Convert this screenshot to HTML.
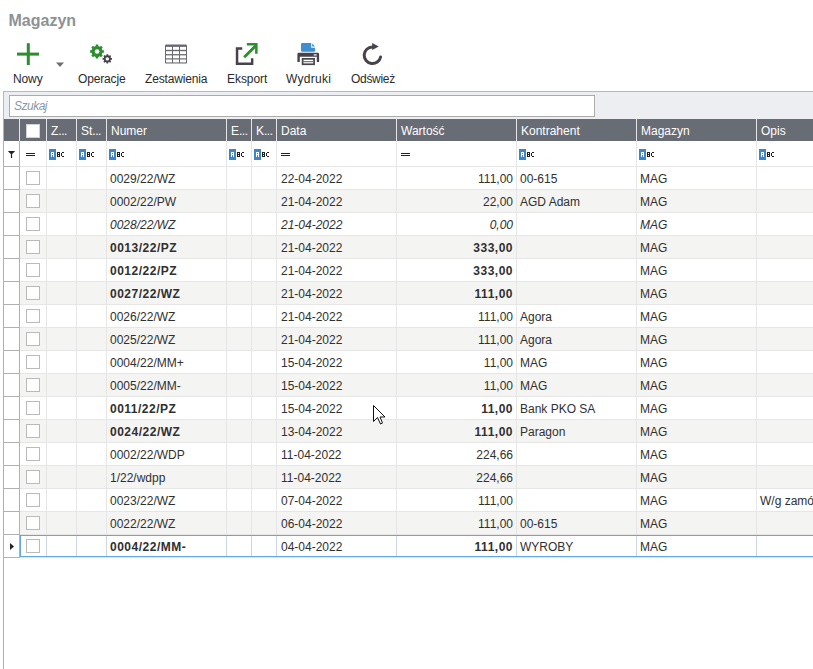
<!DOCTYPE html>
<html><head><meta charset="utf-8"><style>
*{margin:0;padding:0;box-sizing:border-box}
html,body{width:813px;height:669px;overflow:hidden;background:#fff}
body{position:relative;font-family:"Liberation Sans", sans-serif;color:#303030}
.abs{position:absolute}
.t{position:absolute;white-space:nowrap;font-size:12px;line-height:14px}
.lbl{position:absolute;white-space:nowrap;font-size:12px;line-height:14px;color:#2b2b2b;top:72px}
.hl{position:absolute;top:119px;height:22px;width:1px;background:#e4e5e7}
.ht{position:absolute;top:124px;color:#fff;font-size:12px;line-height:14px;white-space:nowrap}
.vl{position:absolute;width:1px;background:#e6e6e6}
.cb{position:absolute;left:26px;width:14px;height:14px;border:1px solid #bababa;background:#fff}
.abc{position:absolute;top:149px;width:16px;height:11px}
</style></head><body>

<div class="t" style="left:8.5px;top:11px;font-size:16px;line-height:19px;font-weight:bold;color:#8d9296">Magazyn</div>
<svg class="abs" style="left:0;top:36px" width="420" height="34" viewBox="0 36 420 34">
<rect x="17" y="52.6" width="22" height="3" fill="#2c8e2c"/>
<rect x="26.8" y="43.2" width="3" height="21.8" fill="#2c8e2c"/>
<path d="M56 62.5 L64 62.5 L60 67 Z" fill="#6e6e6e"/>
<path d="M95.75 46.04L95.75 44.61L98.25 44.61L98.25 46.04L99.98 46.76L100.99 45.75L102.75 47.51L101.74 48.52L102.46 50.25L103.89 50.25L103.89 52.75L102.46 52.75L101.74 54.48L102.75 55.49L100.99 57.25L99.98 56.24L98.25 56.96L98.25 58.39L95.75 58.39L95.75 56.96L94.02 56.24L93.01 57.25L91.25 55.49L92.26 54.48L91.54 52.75L90.11 52.75L90.11 50.25L91.54 50.25L92.26 48.52L91.25 47.51L93.01 45.75L94.02 46.76Z" fill="#2c8e2c"/><circle cx="97.1" cy="51.5" r="2.3" fill="#fff"/>
<path d="M106.45 55.30L106.45 54.18L108.15 54.18L108.15 55.30L109.25 55.75L110.04 54.96L111.24 56.16L110.45 56.95L110.90 58.05L112.02 58.05L112.02 59.75L110.90 59.75L110.45 60.85L111.24 61.64L110.04 62.84L109.25 62.05L108.15 62.50L108.15 63.62L106.45 63.62L106.45 62.50L105.35 62.05L104.56 62.84L103.36 61.64L104.15 60.85L103.70 59.75L102.58 59.75L102.58 58.05L103.70 58.05L104.15 56.95L103.36 56.16L104.56 54.96L105.35 55.75Z" fill="#46434c"/><circle cx="107.3" cy="58.9" r="1.7" fill="#fff"/>
<rect x="165" y="44.4" width="22" height="19.2" rx="1.2" fill="#6b6970"/>
<rect x="166" y="46.9" width="6" height="2.9" fill="#fff"/>
<rect x="166" y="51.2" width="6" height="2.9" fill="#fff"/>
<rect x="166" y="55.4" width="6" height="2.9" fill="#fff"/>
<rect x="166" y="59.5" width="6" height="2.9" fill="#fff"/>
<rect x="173" y="46.9" width="6" height="2.9" fill="#fff"/>
<rect x="173" y="51.2" width="6" height="2.9" fill="#fff"/>
<rect x="173" y="55.4" width="6" height="2.9" fill="#fff"/>
<rect x="173" y="59.5" width="6" height="2.9" fill="#fff"/>
<rect x="180" y="46.9" width="6" height="2.9" fill="#fff"/>
<rect x="180" y="51.2" width="6" height="2.9" fill="#fff"/>
<rect x="180" y="55.4" width="6" height="2.9" fill="#fff"/>
<rect x="180" y="59.5" width="6" height="2.9" fill="#fff"/>
<path d="M242.25 48.55 H237.05 V63.75 H252.15 V58.2" fill="none" stroke="#46434c" stroke-width="2.5"/>
<path d="M246.85 44.35 H256.35 V53.8" fill="none" stroke="#2c8e2c" stroke-width="2.5"/>
<path d="M244.2 57.2 L256.2 45.2" fill="none" stroke="#2c8e2c" stroke-width="2.8"/>
<path d="M301 44.2 Q301 42.9 302.3 42.9 H311.2 V47.7 H315.1 V50.5 Q315.1 51.7 313.9 51.7 H302.2 Q301 51.7 301 50.5 Z" fill="#3d8fd1"/>
<path d="M312.2 43.6 L315 46.6 H312.2 Z" fill="#3d8fd1"/>
<path d="M297.4 54.2 Q297.4 52.8 298.8 52.8 H317.7 Q319.1 52.8 319.1 54.2 V62 H316.8 V56.7 H299.8 V62 H297.4 Z" fill="#46434c"/>
<rect x="313.7" y="54" width="3" height="1.7" fill="#c9c9cc"/>
<rect x="302.6" y="58.85" width="11.5" height="5.4" fill="#fff" stroke="#46434c" stroke-width="1.7"/>
<rect x="302.6" y="61.1" width="11.5" height="1.1" fill="#6a6a6a"/>
<path d="M372.4 47 A8.3 8.3 0 1 0 380.6 57" fill="none" stroke="#46434c" stroke-width="3" stroke-linecap="round"/>
<path d="M372.2 43.1 L378.8 46.6 L372.2 50 Z" fill="#46434c"/>
</svg>
<div class="lbl" style="left:13px;letter-spacing:-0.12px">Nowy</div>
<div class="lbl" style="left:78px;letter-spacing:-0.15px">Operacje</div>
<div class="lbl" style="left:145px;letter-spacing:-0.15px">Zestawienia</div>
<div class="lbl" style="left:227px;letter-spacing:-0.05px">Eksport</div>
<div class="lbl" style="left:286px;letter-spacing:0.3px">Wydruki</div>
<div class="lbl" style="left:351px;letter-spacing:-0.3px">Odśwież</div>
<div class="abs" style="left:3px;top:91px;width:820px;height:28px;background:#eceef1;border-top:1px solid #b9b9b9;border-left:1px solid #b9b9b9"></div>
<div class="abs" style="left:9px;top:95px;width:586px;height:22px;background:#fff;border:1px solid #ababab"></div>
<div class="t" style="left:14px;top:99px;font-style:italic;color:#8a97a8;letter-spacing:-0.5px">Szukaj</div>
<div class="abs" style="left:3px;top:119px;width:1px;height:560px;background:#b1b1b1"></div>
<div class="abs" style="left:4px;top:119px;width:820px;height:22px;background:#686c75"></div>
<div class="hl" style="left:19px"></div>
<div class="hl" style="left:46px"></div>
<div class="hl" style="left:76px"></div>
<div class="hl" style="left:106px"></div>
<div class="hl" style="left:226px"></div>
<div class="hl" style="left:251px"></div>
<div class="hl" style="left:276px"></div>
<div class="hl" style="left:396px"></div>
<div class="hl" style="left:516px"></div>
<div class="hl" style="left:636px"></div>
<div class="hl" style="left:756px"></div>
<div class="abs" style="left:26px;top:124px;width:14px;height:14px;background:#fff;border:1px solid #d0d3d6"></div>
<div class="ht" style="left:51px">Z<span style="letter-spacing:-0.5px">...</span></div>
<div class="ht" style="left:81px">St<span style="letter-spacing:-0.5px">...</span></div>
<div class="ht" style="left:111px">Numer</div>
<div class="ht" style="left:231px">E<span style="letter-spacing:-0.5px">...</span></div>
<div class="ht" style="left:256px">K<span style="letter-spacing:-0.5px">...</span></div>
<div class="ht" style="left:281px">Data</div>
<div class="ht" style="left:401px">Wartość</div>
<div class="ht" style="left:521px">Kontrahent</div>
<div class="ht" style="left:641px">Magazyn</div>
<div class="ht" style="left:761px">Opis</div>
<svg class="abs" style="left:7px;top:150px" width="9" height="9" viewBox="7 150 9 9"><path d="M8.2 150.9 H14.8 V151.6 L12.1 154 V158 H10.9 V154 L8.2 151.6 Z" fill="#222"/></svg>
<div class="abs" style="left:26px;top:153px;width:9px;height:1px;background:#222"></div>
<div class="abs" style="left:26px;top:155px;width:9px;height:1px;background:#222"></div>
<div class="abs" style="left:281px;top:153px;width:9px;height:1px;background:#222"></div>
<div class="abs" style="left:281px;top:155px;width:9px;height:1px;background:#222"></div>
<div class="abs" style="left:401px;top:153px;width:9px;height:1px;background:#222"></div>
<div class="abs" style="left:401px;top:155px;width:9px;height:1px;background:#222"></div>
<svg class="abc" style="left:49px" width="16" height="11" viewBox="0 0 16 11" shape-rendering="crispEdges"><rect x="0" y="0" width="7" height="11" fill="#3e86c8"/><rect x="2" y="3" width="1" height="1" fill="#fff"/><rect x="3" y="3" width="1" height="1" fill="#fff"/><rect x="4" y="3" width="1" height="1" fill="#fff"/><rect x="2" y="4" width="1" height="1" fill="#fff"/><rect x="4" y="4" width="1" height="1" fill="#fff"/><rect x="2" y="5" width="1" height="1" fill="#fff"/><rect x="3" y="5" width="1" height="1" fill="#fff"/><rect x="4" y="5" width="1" height="1" fill="#fff"/><rect x="2" y="6" width="1" height="1" fill="#fff"/><rect x="4" y="6" width="1" height="1" fill="#fff"/><rect x="2" y="7" width="1" height="1" fill="#fff"/><rect x="4" y="7" width="1" height="1" fill="#fff"/><rect x="8" y="3" width="1" height="1" fill="#1e1e1e"/><rect x="9" y="3" width="1" height="1" fill="#1e1e1e"/><rect x="10" y="3" width="1" height="1" fill="#1e1e1e"/><rect x="8" y="4" width="1" height="1" fill="#1e1e1e"/><rect x="10" y="4" width="1" height="1" fill="#1e1e1e"/><rect x="8" y="5" width="1" height="1" fill="#1e1e1e"/><rect x="9" y="5" width="1" height="1" fill="#1e1e1e"/><rect x="10" y="5" width="1" height="1" fill="#1e1e1e"/><rect x="8" y="6" width="1" height="1" fill="#1e1e1e"/><rect x="10" y="6" width="1" height="1" fill="#1e1e1e"/><rect x="8" y="7" width="1" height="1" fill="#1e1e1e"/><rect x="9" y="7" width="1" height="1" fill="#1e1e1e"/><rect x="10" y="7" width="1" height="1" fill="#1e1e1e"/><rect x="13" y="3" width="1" height="1" fill="#1e1e1e"/><rect x="14" y="3" width="1" height="1" fill="#1e1e1e"/><rect x="12" y="4" width="1" height="1" fill="#1e1e1e"/><rect x="12" y="5" width="1" height="1" fill="#1e1e1e"/><rect x="12" y="6" width="1" height="1" fill="#1e1e1e"/><rect x="13" y="7" width="1" height="1" fill="#1e1e1e"/><rect x="14" y="7" width="1" height="1" fill="#1e1e1e"/></svg>
<svg class="abc" style="left:79px" width="16" height="11" viewBox="0 0 16 11" shape-rendering="crispEdges"><rect x="0" y="0" width="7" height="11" fill="#3e86c8"/><rect x="2" y="3" width="1" height="1" fill="#fff"/><rect x="3" y="3" width="1" height="1" fill="#fff"/><rect x="4" y="3" width="1" height="1" fill="#fff"/><rect x="2" y="4" width="1" height="1" fill="#fff"/><rect x="4" y="4" width="1" height="1" fill="#fff"/><rect x="2" y="5" width="1" height="1" fill="#fff"/><rect x="3" y="5" width="1" height="1" fill="#fff"/><rect x="4" y="5" width="1" height="1" fill="#fff"/><rect x="2" y="6" width="1" height="1" fill="#fff"/><rect x="4" y="6" width="1" height="1" fill="#fff"/><rect x="2" y="7" width="1" height="1" fill="#fff"/><rect x="4" y="7" width="1" height="1" fill="#fff"/><rect x="8" y="3" width="1" height="1" fill="#1e1e1e"/><rect x="9" y="3" width="1" height="1" fill="#1e1e1e"/><rect x="10" y="3" width="1" height="1" fill="#1e1e1e"/><rect x="8" y="4" width="1" height="1" fill="#1e1e1e"/><rect x="10" y="4" width="1" height="1" fill="#1e1e1e"/><rect x="8" y="5" width="1" height="1" fill="#1e1e1e"/><rect x="9" y="5" width="1" height="1" fill="#1e1e1e"/><rect x="10" y="5" width="1" height="1" fill="#1e1e1e"/><rect x="8" y="6" width="1" height="1" fill="#1e1e1e"/><rect x="10" y="6" width="1" height="1" fill="#1e1e1e"/><rect x="8" y="7" width="1" height="1" fill="#1e1e1e"/><rect x="9" y="7" width="1" height="1" fill="#1e1e1e"/><rect x="10" y="7" width="1" height="1" fill="#1e1e1e"/><rect x="13" y="3" width="1" height="1" fill="#1e1e1e"/><rect x="14" y="3" width="1" height="1" fill="#1e1e1e"/><rect x="12" y="4" width="1" height="1" fill="#1e1e1e"/><rect x="12" y="5" width="1" height="1" fill="#1e1e1e"/><rect x="12" y="6" width="1" height="1" fill="#1e1e1e"/><rect x="13" y="7" width="1" height="1" fill="#1e1e1e"/><rect x="14" y="7" width="1" height="1" fill="#1e1e1e"/></svg>
<svg class="abc" style="left:109px" width="16" height="11" viewBox="0 0 16 11" shape-rendering="crispEdges"><rect x="0" y="0" width="7" height="11" fill="#3e86c8"/><rect x="2" y="3" width="1" height="1" fill="#fff"/><rect x="3" y="3" width="1" height="1" fill="#fff"/><rect x="4" y="3" width="1" height="1" fill="#fff"/><rect x="2" y="4" width="1" height="1" fill="#fff"/><rect x="4" y="4" width="1" height="1" fill="#fff"/><rect x="2" y="5" width="1" height="1" fill="#fff"/><rect x="3" y="5" width="1" height="1" fill="#fff"/><rect x="4" y="5" width="1" height="1" fill="#fff"/><rect x="2" y="6" width="1" height="1" fill="#fff"/><rect x="4" y="6" width="1" height="1" fill="#fff"/><rect x="2" y="7" width="1" height="1" fill="#fff"/><rect x="4" y="7" width="1" height="1" fill="#fff"/><rect x="8" y="3" width="1" height="1" fill="#1e1e1e"/><rect x="9" y="3" width="1" height="1" fill="#1e1e1e"/><rect x="10" y="3" width="1" height="1" fill="#1e1e1e"/><rect x="8" y="4" width="1" height="1" fill="#1e1e1e"/><rect x="10" y="4" width="1" height="1" fill="#1e1e1e"/><rect x="8" y="5" width="1" height="1" fill="#1e1e1e"/><rect x="9" y="5" width="1" height="1" fill="#1e1e1e"/><rect x="10" y="5" width="1" height="1" fill="#1e1e1e"/><rect x="8" y="6" width="1" height="1" fill="#1e1e1e"/><rect x="10" y="6" width="1" height="1" fill="#1e1e1e"/><rect x="8" y="7" width="1" height="1" fill="#1e1e1e"/><rect x="9" y="7" width="1" height="1" fill="#1e1e1e"/><rect x="10" y="7" width="1" height="1" fill="#1e1e1e"/><rect x="13" y="3" width="1" height="1" fill="#1e1e1e"/><rect x="14" y="3" width="1" height="1" fill="#1e1e1e"/><rect x="12" y="4" width="1" height="1" fill="#1e1e1e"/><rect x="12" y="5" width="1" height="1" fill="#1e1e1e"/><rect x="12" y="6" width="1" height="1" fill="#1e1e1e"/><rect x="13" y="7" width="1" height="1" fill="#1e1e1e"/><rect x="14" y="7" width="1" height="1" fill="#1e1e1e"/></svg>
<svg class="abc" style="left:229px" width="16" height="11" viewBox="0 0 16 11" shape-rendering="crispEdges"><rect x="0" y="0" width="7" height="11" fill="#3e86c8"/><rect x="2" y="3" width="1" height="1" fill="#fff"/><rect x="3" y="3" width="1" height="1" fill="#fff"/><rect x="4" y="3" width="1" height="1" fill="#fff"/><rect x="2" y="4" width="1" height="1" fill="#fff"/><rect x="4" y="4" width="1" height="1" fill="#fff"/><rect x="2" y="5" width="1" height="1" fill="#fff"/><rect x="3" y="5" width="1" height="1" fill="#fff"/><rect x="4" y="5" width="1" height="1" fill="#fff"/><rect x="2" y="6" width="1" height="1" fill="#fff"/><rect x="4" y="6" width="1" height="1" fill="#fff"/><rect x="2" y="7" width="1" height="1" fill="#fff"/><rect x="4" y="7" width="1" height="1" fill="#fff"/><rect x="8" y="3" width="1" height="1" fill="#1e1e1e"/><rect x="9" y="3" width="1" height="1" fill="#1e1e1e"/><rect x="10" y="3" width="1" height="1" fill="#1e1e1e"/><rect x="8" y="4" width="1" height="1" fill="#1e1e1e"/><rect x="10" y="4" width="1" height="1" fill="#1e1e1e"/><rect x="8" y="5" width="1" height="1" fill="#1e1e1e"/><rect x="9" y="5" width="1" height="1" fill="#1e1e1e"/><rect x="10" y="5" width="1" height="1" fill="#1e1e1e"/><rect x="8" y="6" width="1" height="1" fill="#1e1e1e"/><rect x="10" y="6" width="1" height="1" fill="#1e1e1e"/><rect x="8" y="7" width="1" height="1" fill="#1e1e1e"/><rect x="9" y="7" width="1" height="1" fill="#1e1e1e"/><rect x="10" y="7" width="1" height="1" fill="#1e1e1e"/><rect x="13" y="3" width="1" height="1" fill="#1e1e1e"/><rect x="14" y="3" width="1" height="1" fill="#1e1e1e"/><rect x="12" y="4" width="1" height="1" fill="#1e1e1e"/><rect x="12" y="5" width="1" height="1" fill="#1e1e1e"/><rect x="12" y="6" width="1" height="1" fill="#1e1e1e"/><rect x="13" y="7" width="1" height="1" fill="#1e1e1e"/><rect x="14" y="7" width="1" height="1" fill="#1e1e1e"/></svg>
<svg class="abc" style="left:254px" width="16" height="11" viewBox="0 0 16 11" shape-rendering="crispEdges"><rect x="0" y="0" width="7" height="11" fill="#3e86c8"/><rect x="2" y="3" width="1" height="1" fill="#fff"/><rect x="3" y="3" width="1" height="1" fill="#fff"/><rect x="4" y="3" width="1" height="1" fill="#fff"/><rect x="2" y="4" width="1" height="1" fill="#fff"/><rect x="4" y="4" width="1" height="1" fill="#fff"/><rect x="2" y="5" width="1" height="1" fill="#fff"/><rect x="3" y="5" width="1" height="1" fill="#fff"/><rect x="4" y="5" width="1" height="1" fill="#fff"/><rect x="2" y="6" width="1" height="1" fill="#fff"/><rect x="4" y="6" width="1" height="1" fill="#fff"/><rect x="2" y="7" width="1" height="1" fill="#fff"/><rect x="4" y="7" width="1" height="1" fill="#fff"/><rect x="8" y="3" width="1" height="1" fill="#1e1e1e"/><rect x="9" y="3" width="1" height="1" fill="#1e1e1e"/><rect x="10" y="3" width="1" height="1" fill="#1e1e1e"/><rect x="8" y="4" width="1" height="1" fill="#1e1e1e"/><rect x="10" y="4" width="1" height="1" fill="#1e1e1e"/><rect x="8" y="5" width="1" height="1" fill="#1e1e1e"/><rect x="9" y="5" width="1" height="1" fill="#1e1e1e"/><rect x="10" y="5" width="1" height="1" fill="#1e1e1e"/><rect x="8" y="6" width="1" height="1" fill="#1e1e1e"/><rect x="10" y="6" width="1" height="1" fill="#1e1e1e"/><rect x="8" y="7" width="1" height="1" fill="#1e1e1e"/><rect x="9" y="7" width="1" height="1" fill="#1e1e1e"/><rect x="10" y="7" width="1" height="1" fill="#1e1e1e"/><rect x="13" y="3" width="1" height="1" fill="#1e1e1e"/><rect x="14" y="3" width="1" height="1" fill="#1e1e1e"/><rect x="12" y="4" width="1" height="1" fill="#1e1e1e"/><rect x="12" y="5" width="1" height="1" fill="#1e1e1e"/><rect x="12" y="6" width="1" height="1" fill="#1e1e1e"/><rect x="13" y="7" width="1" height="1" fill="#1e1e1e"/><rect x="14" y="7" width="1" height="1" fill="#1e1e1e"/></svg>
<svg class="abc" style="left:519px" width="16" height="11" viewBox="0 0 16 11" shape-rendering="crispEdges"><rect x="0" y="0" width="7" height="11" fill="#3e86c8"/><rect x="2" y="3" width="1" height="1" fill="#fff"/><rect x="3" y="3" width="1" height="1" fill="#fff"/><rect x="4" y="3" width="1" height="1" fill="#fff"/><rect x="2" y="4" width="1" height="1" fill="#fff"/><rect x="4" y="4" width="1" height="1" fill="#fff"/><rect x="2" y="5" width="1" height="1" fill="#fff"/><rect x="3" y="5" width="1" height="1" fill="#fff"/><rect x="4" y="5" width="1" height="1" fill="#fff"/><rect x="2" y="6" width="1" height="1" fill="#fff"/><rect x="4" y="6" width="1" height="1" fill="#fff"/><rect x="2" y="7" width="1" height="1" fill="#fff"/><rect x="4" y="7" width="1" height="1" fill="#fff"/><rect x="8" y="3" width="1" height="1" fill="#1e1e1e"/><rect x="9" y="3" width="1" height="1" fill="#1e1e1e"/><rect x="10" y="3" width="1" height="1" fill="#1e1e1e"/><rect x="8" y="4" width="1" height="1" fill="#1e1e1e"/><rect x="10" y="4" width="1" height="1" fill="#1e1e1e"/><rect x="8" y="5" width="1" height="1" fill="#1e1e1e"/><rect x="9" y="5" width="1" height="1" fill="#1e1e1e"/><rect x="10" y="5" width="1" height="1" fill="#1e1e1e"/><rect x="8" y="6" width="1" height="1" fill="#1e1e1e"/><rect x="10" y="6" width="1" height="1" fill="#1e1e1e"/><rect x="8" y="7" width="1" height="1" fill="#1e1e1e"/><rect x="9" y="7" width="1" height="1" fill="#1e1e1e"/><rect x="10" y="7" width="1" height="1" fill="#1e1e1e"/><rect x="13" y="3" width="1" height="1" fill="#1e1e1e"/><rect x="14" y="3" width="1" height="1" fill="#1e1e1e"/><rect x="12" y="4" width="1" height="1" fill="#1e1e1e"/><rect x="12" y="5" width="1" height="1" fill="#1e1e1e"/><rect x="12" y="6" width="1" height="1" fill="#1e1e1e"/><rect x="13" y="7" width="1" height="1" fill="#1e1e1e"/><rect x="14" y="7" width="1" height="1" fill="#1e1e1e"/></svg>
<svg class="abc" style="left:639px" width="16" height="11" viewBox="0 0 16 11" shape-rendering="crispEdges"><rect x="0" y="0" width="7" height="11" fill="#3e86c8"/><rect x="2" y="3" width="1" height="1" fill="#fff"/><rect x="3" y="3" width="1" height="1" fill="#fff"/><rect x="4" y="3" width="1" height="1" fill="#fff"/><rect x="2" y="4" width="1" height="1" fill="#fff"/><rect x="4" y="4" width="1" height="1" fill="#fff"/><rect x="2" y="5" width="1" height="1" fill="#fff"/><rect x="3" y="5" width="1" height="1" fill="#fff"/><rect x="4" y="5" width="1" height="1" fill="#fff"/><rect x="2" y="6" width="1" height="1" fill="#fff"/><rect x="4" y="6" width="1" height="1" fill="#fff"/><rect x="2" y="7" width="1" height="1" fill="#fff"/><rect x="4" y="7" width="1" height="1" fill="#fff"/><rect x="8" y="3" width="1" height="1" fill="#1e1e1e"/><rect x="9" y="3" width="1" height="1" fill="#1e1e1e"/><rect x="10" y="3" width="1" height="1" fill="#1e1e1e"/><rect x="8" y="4" width="1" height="1" fill="#1e1e1e"/><rect x="10" y="4" width="1" height="1" fill="#1e1e1e"/><rect x="8" y="5" width="1" height="1" fill="#1e1e1e"/><rect x="9" y="5" width="1" height="1" fill="#1e1e1e"/><rect x="10" y="5" width="1" height="1" fill="#1e1e1e"/><rect x="8" y="6" width="1" height="1" fill="#1e1e1e"/><rect x="10" y="6" width="1" height="1" fill="#1e1e1e"/><rect x="8" y="7" width="1" height="1" fill="#1e1e1e"/><rect x="9" y="7" width="1" height="1" fill="#1e1e1e"/><rect x="10" y="7" width="1" height="1" fill="#1e1e1e"/><rect x="13" y="3" width="1" height="1" fill="#1e1e1e"/><rect x="14" y="3" width="1" height="1" fill="#1e1e1e"/><rect x="12" y="4" width="1" height="1" fill="#1e1e1e"/><rect x="12" y="5" width="1" height="1" fill="#1e1e1e"/><rect x="12" y="6" width="1" height="1" fill="#1e1e1e"/><rect x="13" y="7" width="1" height="1" fill="#1e1e1e"/><rect x="14" y="7" width="1" height="1" fill="#1e1e1e"/></svg>
<svg class="abc" style="left:759px" width="16" height="11" viewBox="0 0 16 11" shape-rendering="crispEdges"><rect x="0" y="0" width="7" height="11" fill="#3e86c8"/><rect x="2" y="3" width="1" height="1" fill="#fff"/><rect x="3" y="3" width="1" height="1" fill="#fff"/><rect x="4" y="3" width="1" height="1" fill="#fff"/><rect x="2" y="4" width="1" height="1" fill="#fff"/><rect x="4" y="4" width="1" height="1" fill="#fff"/><rect x="2" y="5" width="1" height="1" fill="#fff"/><rect x="3" y="5" width="1" height="1" fill="#fff"/><rect x="4" y="5" width="1" height="1" fill="#fff"/><rect x="2" y="6" width="1" height="1" fill="#fff"/><rect x="4" y="6" width="1" height="1" fill="#fff"/><rect x="2" y="7" width="1" height="1" fill="#fff"/><rect x="4" y="7" width="1" height="1" fill="#fff"/><rect x="8" y="3" width="1" height="1" fill="#1e1e1e"/><rect x="9" y="3" width="1" height="1" fill="#1e1e1e"/><rect x="10" y="3" width="1" height="1" fill="#1e1e1e"/><rect x="8" y="4" width="1" height="1" fill="#1e1e1e"/><rect x="10" y="4" width="1" height="1" fill="#1e1e1e"/><rect x="8" y="5" width="1" height="1" fill="#1e1e1e"/><rect x="9" y="5" width="1" height="1" fill="#1e1e1e"/><rect x="10" y="5" width="1" height="1" fill="#1e1e1e"/><rect x="8" y="6" width="1" height="1" fill="#1e1e1e"/><rect x="10" y="6" width="1" height="1" fill="#1e1e1e"/><rect x="8" y="7" width="1" height="1" fill="#1e1e1e"/><rect x="9" y="7" width="1" height="1" fill="#1e1e1e"/><rect x="10" y="7" width="1" height="1" fill="#1e1e1e"/><rect x="13" y="3" width="1" height="1" fill="#1e1e1e"/><rect x="14" y="3" width="1" height="1" fill="#1e1e1e"/><rect x="12" y="4" width="1" height="1" fill="#1e1e1e"/><rect x="12" y="5" width="1" height="1" fill="#1e1e1e"/><rect x="12" y="6" width="1" height="1" fill="#1e1e1e"/><rect x="13" y="7" width="1" height="1" fill="#1e1e1e"/><rect x="14" y="7" width="1" height="1" fill="#1e1e1e"/></svg>
<div class="t" style="left:110px;top:172px;">0029/22/WZ</div>
<div class="t" style="left:281px;top:172px;">22-04-2022</div>
<div class="t" style="left:396px;width:117px;text-align:right;top:172px;">111,00</div>
<div class="t" style="left:520px;top:172px;">00-615</div>
<div class="t" style="left:640px;top:172px;">MAG</div>
<div class="cb" style="top:171px"></div>
<div class="abs" style="left:20px;top:190px;width:800px;height:22px;background:#f4f4f3"></div>
<div class="t" style="left:110px;top:195px;">0002/22/PW</div>
<div class="t" style="left:281px;top:195px;">21-04-2022</div>
<div class="t" style="left:396px;width:117px;text-align:right;top:195px;">22,00</div>
<div class="t" style="left:520px;top:195px;">AGD Adam</div>
<div class="t" style="left:640px;top:195px;">MAG</div>
<div class="cb" style="top:194px"></div>
<div class="t" style="left:110px;top:218px;font-style:italic;">0028/22/WZ</div>
<div class="t" style="left:281px;top:218px;font-style:italic;">21-04-2022</div>
<div class="t" style="left:396px;width:117px;text-align:right;top:218px;font-style:italic;">0,00</div>
<div class="t" style="left:640px;top:218px;font-style:italic;">MAG</div>
<div class="cb" style="top:217px"></div>
<div class="abs" style="left:20px;top:236px;width:800px;height:22px;background:#f4f4f3"></div>
<div class="t" style="left:110px;top:241px;font-weight:bold;letter-spacing:0.5px;">0013/22/PZ</div>
<div class="t" style="left:281px;top:241px;">21-04-2022</div>
<div class="t" style="left:396px;width:117px;text-align:right;top:241px;font-weight:bold;letter-spacing:0.5px;">333,00</div>
<div class="t" style="left:640px;top:241px;">MAG</div>
<div class="cb" style="top:240px"></div>
<div class="t" style="left:110px;top:264px;font-weight:bold;letter-spacing:0.5px;">0012/22/PZ</div>
<div class="t" style="left:281px;top:264px;">21-04-2022</div>
<div class="t" style="left:396px;width:117px;text-align:right;top:264px;font-weight:bold;letter-spacing:0.5px;">333,00</div>
<div class="t" style="left:640px;top:264px;">MAG</div>
<div class="cb" style="top:263px"></div>
<div class="abs" style="left:20px;top:282px;width:800px;height:22px;background:#f4f4f3"></div>
<div class="t" style="left:110px;top:287px;font-weight:bold;letter-spacing:0.5px;">0027/22/WZ</div>
<div class="t" style="left:281px;top:287px;">21-04-2022</div>
<div class="t" style="left:396px;width:117px;text-align:right;top:287px;font-weight:bold;letter-spacing:0.5px;">111,00</div>
<div class="t" style="left:640px;top:287px;">MAG</div>
<div class="cb" style="top:286px"></div>
<div class="t" style="left:110px;top:310px;">0026/22/WZ</div>
<div class="t" style="left:281px;top:310px;">21-04-2022</div>
<div class="t" style="left:396px;width:117px;text-align:right;top:310px;">111,00</div>
<div class="t" style="left:520px;top:310px;">Agora</div>
<div class="t" style="left:640px;top:310px;">MAG</div>
<div class="cb" style="top:309px"></div>
<div class="abs" style="left:20px;top:328px;width:800px;height:22px;background:#f4f4f3"></div>
<div class="t" style="left:110px;top:333px;">0025/22/WZ</div>
<div class="t" style="left:281px;top:333px;">21-04-2022</div>
<div class="t" style="left:396px;width:117px;text-align:right;top:333px;">111,00</div>
<div class="t" style="left:520px;top:333px;">Agora</div>
<div class="t" style="left:640px;top:333px;">MAG</div>
<div class="cb" style="top:332px"></div>
<div class="t" style="left:110px;top:356px;">0004/22/MM+</div>
<div class="t" style="left:281px;top:356px;">15-04-2022</div>
<div class="t" style="left:396px;width:117px;text-align:right;top:356px;">11,00</div>
<div class="t" style="left:520px;top:356px;">MAG</div>
<div class="t" style="left:640px;top:356px;">MAG</div>
<div class="cb" style="top:355px"></div>
<div class="abs" style="left:20px;top:374px;width:800px;height:22px;background:#f4f4f3"></div>
<div class="t" style="left:110px;top:379px;">0005/22/MM-</div>
<div class="t" style="left:281px;top:379px;">15-04-2022</div>
<div class="t" style="left:396px;width:117px;text-align:right;top:379px;">11,00</div>
<div class="t" style="left:520px;top:379px;">MAG</div>
<div class="t" style="left:640px;top:379px;">MAG</div>
<div class="cb" style="top:378px"></div>
<div class="t" style="left:110px;top:402px;font-weight:bold;letter-spacing:0.5px;">0011/22/PZ</div>
<div class="t" style="left:281px;top:402px;">15-04-2022</div>
<div class="t" style="left:396px;width:117px;text-align:right;top:402px;font-weight:bold;letter-spacing:0.5px;">11,00</div>
<div class="t" style="left:520px;top:402px;">Bank PKO SA</div>
<div class="t" style="left:640px;top:402px;">MAG</div>
<div class="cb" style="top:401px"></div>
<div class="abs" style="left:20px;top:420px;width:800px;height:22px;background:#f4f4f3"></div>
<div class="t" style="left:110px;top:425px;font-weight:bold;letter-spacing:0.5px;">0024/22/WZ</div>
<div class="t" style="left:281px;top:425px;">13-04-2022</div>
<div class="t" style="left:396px;width:117px;text-align:right;top:425px;font-weight:bold;letter-spacing:0.5px;">111,00</div>
<div class="t" style="left:520px;top:425px;">Paragon</div>
<div class="t" style="left:640px;top:425px;">MAG</div>
<div class="cb" style="top:424px"></div>
<div class="t" style="left:110px;top:448px;">0002/22/WDP</div>
<div class="t" style="left:281px;top:448px;">11-04-2022</div>
<div class="t" style="left:396px;width:117px;text-align:right;top:448px;">224,66</div>
<div class="t" style="left:640px;top:448px;">MAG</div>
<div class="cb" style="top:447px"></div>
<div class="abs" style="left:20px;top:466px;width:800px;height:22px;background:#f4f4f3"></div>
<div class="t" style="left:110px;top:471px;">1/22/wdpp</div>
<div class="t" style="left:281px;top:471px;">11-04-2022</div>
<div class="t" style="left:396px;width:117px;text-align:right;top:471px;">224,66</div>
<div class="t" style="left:640px;top:471px;">MAG</div>
<div class="cb" style="top:470px"></div>
<div class="t" style="left:110px;top:494px;">0023/22/WZ</div>
<div class="t" style="left:281px;top:494px;">07-04-2022</div>
<div class="t" style="left:396px;width:117px;text-align:right;top:494px;">111,00</div>
<div class="t" style="left:640px;top:494px;">MAG</div>
<div class="t" style="left:760px;top:494px;">W/g zamówienia</div>
<div class="cb" style="top:493px"></div>
<div class="abs" style="left:20px;top:512px;width:800px;height:22px;background:#f4f4f3"></div>
<div class="t" style="left:110px;top:517px;">0022/22/WZ</div>
<div class="t" style="left:281px;top:517px;">06-04-2022</div>
<div class="t" style="left:396px;width:117px;text-align:right;top:517px;">111,00</div>
<div class="t" style="left:520px;top:517px;">00-615</div>
<div class="t" style="left:640px;top:517px;">MAG</div>
<div class="cb" style="top:516px"></div>
<div class="t" style="left:110px;top:540px;font-weight:bold;letter-spacing:0.5px;">0004/22/MM-</div>
<div class="t" style="left:281px;top:540px;">04-04-2022</div>
<div class="t" style="left:396px;width:117px;text-align:right;top:540px;font-weight:bold;letter-spacing:0.5px;">111,00</div>
<div class="t" style="left:520px;top:540px;">WYROBY</div>
<div class="t" style="left:640px;top:540px;">MAG</div>
<div class="cb" style="top:539px"></div>
<div class="abs" style="left:20px;top:166px;width:800px;height:1px;background:#e6e6e6"></div>
<div class="abs" style="left:3px;top:166px;width:17px;height:1px;background:#b1b1b1"></div>
<div class="abs" style="left:20px;top:189px;width:800px;height:1px;background:#e6e6e6"></div>
<div class="abs" style="left:3px;top:189px;width:17px;height:1px;background:#b1b1b1"></div>
<div class="abs" style="left:20px;top:212px;width:800px;height:1px;background:#e6e6e6"></div>
<div class="abs" style="left:3px;top:212px;width:17px;height:1px;background:#b1b1b1"></div>
<div class="abs" style="left:20px;top:235px;width:800px;height:1px;background:#e6e6e6"></div>
<div class="abs" style="left:3px;top:235px;width:17px;height:1px;background:#b1b1b1"></div>
<div class="abs" style="left:20px;top:258px;width:800px;height:1px;background:#e6e6e6"></div>
<div class="abs" style="left:3px;top:258px;width:17px;height:1px;background:#b1b1b1"></div>
<div class="abs" style="left:20px;top:281px;width:800px;height:1px;background:#e6e6e6"></div>
<div class="abs" style="left:3px;top:281px;width:17px;height:1px;background:#b1b1b1"></div>
<div class="abs" style="left:20px;top:304px;width:800px;height:1px;background:#e6e6e6"></div>
<div class="abs" style="left:3px;top:304px;width:17px;height:1px;background:#b1b1b1"></div>
<div class="abs" style="left:20px;top:327px;width:800px;height:1px;background:#e6e6e6"></div>
<div class="abs" style="left:3px;top:327px;width:17px;height:1px;background:#b1b1b1"></div>
<div class="abs" style="left:20px;top:350px;width:800px;height:1px;background:#e6e6e6"></div>
<div class="abs" style="left:3px;top:350px;width:17px;height:1px;background:#b1b1b1"></div>
<div class="abs" style="left:20px;top:373px;width:800px;height:1px;background:#e6e6e6"></div>
<div class="abs" style="left:3px;top:373px;width:17px;height:1px;background:#b1b1b1"></div>
<div class="abs" style="left:20px;top:396px;width:800px;height:1px;background:#e6e6e6"></div>
<div class="abs" style="left:3px;top:396px;width:17px;height:1px;background:#b1b1b1"></div>
<div class="abs" style="left:20px;top:419px;width:800px;height:1px;background:#e6e6e6"></div>
<div class="abs" style="left:3px;top:419px;width:17px;height:1px;background:#b1b1b1"></div>
<div class="abs" style="left:20px;top:442px;width:800px;height:1px;background:#e6e6e6"></div>
<div class="abs" style="left:3px;top:442px;width:17px;height:1px;background:#b1b1b1"></div>
<div class="abs" style="left:20px;top:465px;width:800px;height:1px;background:#e6e6e6"></div>
<div class="abs" style="left:3px;top:465px;width:17px;height:1px;background:#b1b1b1"></div>
<div class="abs" style="left:20px;top:488px;width:800px;height:1px;background:#e6e6e6"></div>
<div class="abs" style="left:3px;top:488px;width:17px;height:1px;background:#b1b1b1"></div>
<div class="abs" style="left:20px;top:511px;width:800px;height:1px;background:#e6e6e6"></div>
<div class="abs" style="left:3px;top:511px;width:17px;height:1px;background:#b1b1b1"></div>
<div class="abs" style="left:20px;top:534px;width:800px;height:1px;background:#e6e6e6"></div>
<div class="abs" style="left:3px;top:534px;width:17px;height:1px;background:#b1b1b1"></div>
<div class="abs" style="left:20px;top:557px;width:800px;height:1px;background:#e6e6e6"></div>
<div class="abs" style="left:3px;top:557px;width:17px;height:1px;background:#b1b1b1"></div>
<div class="abs" style="left:19px;top:141px;width:1px;height:417px;background:#b1b1b1"></div>
<div class="vl" style="left:46px;top:141px;height:417px"></div>
<div class="vl" style="left:76px;top:141px;height:417px"></div>
<div class="vl" style="left:106px;top:141px;height:417px"></div>
<div class="vl" style="left:226px;top:141px;height:417px"></div>
<div class="vl" style="left:251px;top:141px;height:417px"></div>
<div class="vl" style="left:276px;top:141px;height:417px"></div>
<div class="vl" style="left:396px;top:141px;height:417px"></div>
<div class="vl" style="left:516px;top:141px;height:417px"></div>
<div class="vl" style="left:636px;top:141px;height:417px"></div>
<div class="vl" style="left:756px;top:141px;height:417px"></div>
<div class="abs" style="left:46px;top:535px;width:1px;height:22px;background:#cad6e6"></div>
<div class="abs" style="left:76px;top:535px;width:1px;height:22px;background:#cad6e6"></div>
<div class="abs" style="left:106px;top:535px;width:1px;height:22px;background:#cad6e6"></div>
<div class="abs" style="left:226px;top:535px;width:1px;height:22px;background:#cad6e6"></div>
<div class="abs" style="left:251px;top:535px;width:1px;height:22px;background:#cad6e6"></div>
<div class="abs" style="left:276px;top:535px;width:1px;height:22px;background:#cad6e6"></div>
<div class="abs" style="left:396px;top:535px;width:1px;height:22px;background:#cad6e6"></div>
<div class="abs" style="left:516px;top:535px;width:1px;height:22px;background:#cad6e6"></div>
<div class="abs" style="left:636px;top:535px;width:1px;height:22px;background:#cad6e6"></div>
<div class="abs" style="left:756px;top:535px;width:1px;height:22px;background:#cad6e6"></div>
<div class="abs" style="left:20px;top:535px;width:800px;height:22px;border:1px solid #62a8e6;border-right:none"></div>
<svg class="abs" style="left:9px;top:542px" width="6" height="9" viewBox="0 0 6 9"><path d="M1 1 L5 4.5 L1 8 Z" fill="#222"/></svg>
<svg class="abs" style="left:372px;top:404px" width="14" height="22" viewBox="0 0 14 22"><path d="M1.5 1.5 V17.5 L5.5 13.5 L8.5 20 L10.5 19 L8 13 H13 Z" fill="#fff" stroke="#111" stroke-width="1"/></svg>
</body></html>
